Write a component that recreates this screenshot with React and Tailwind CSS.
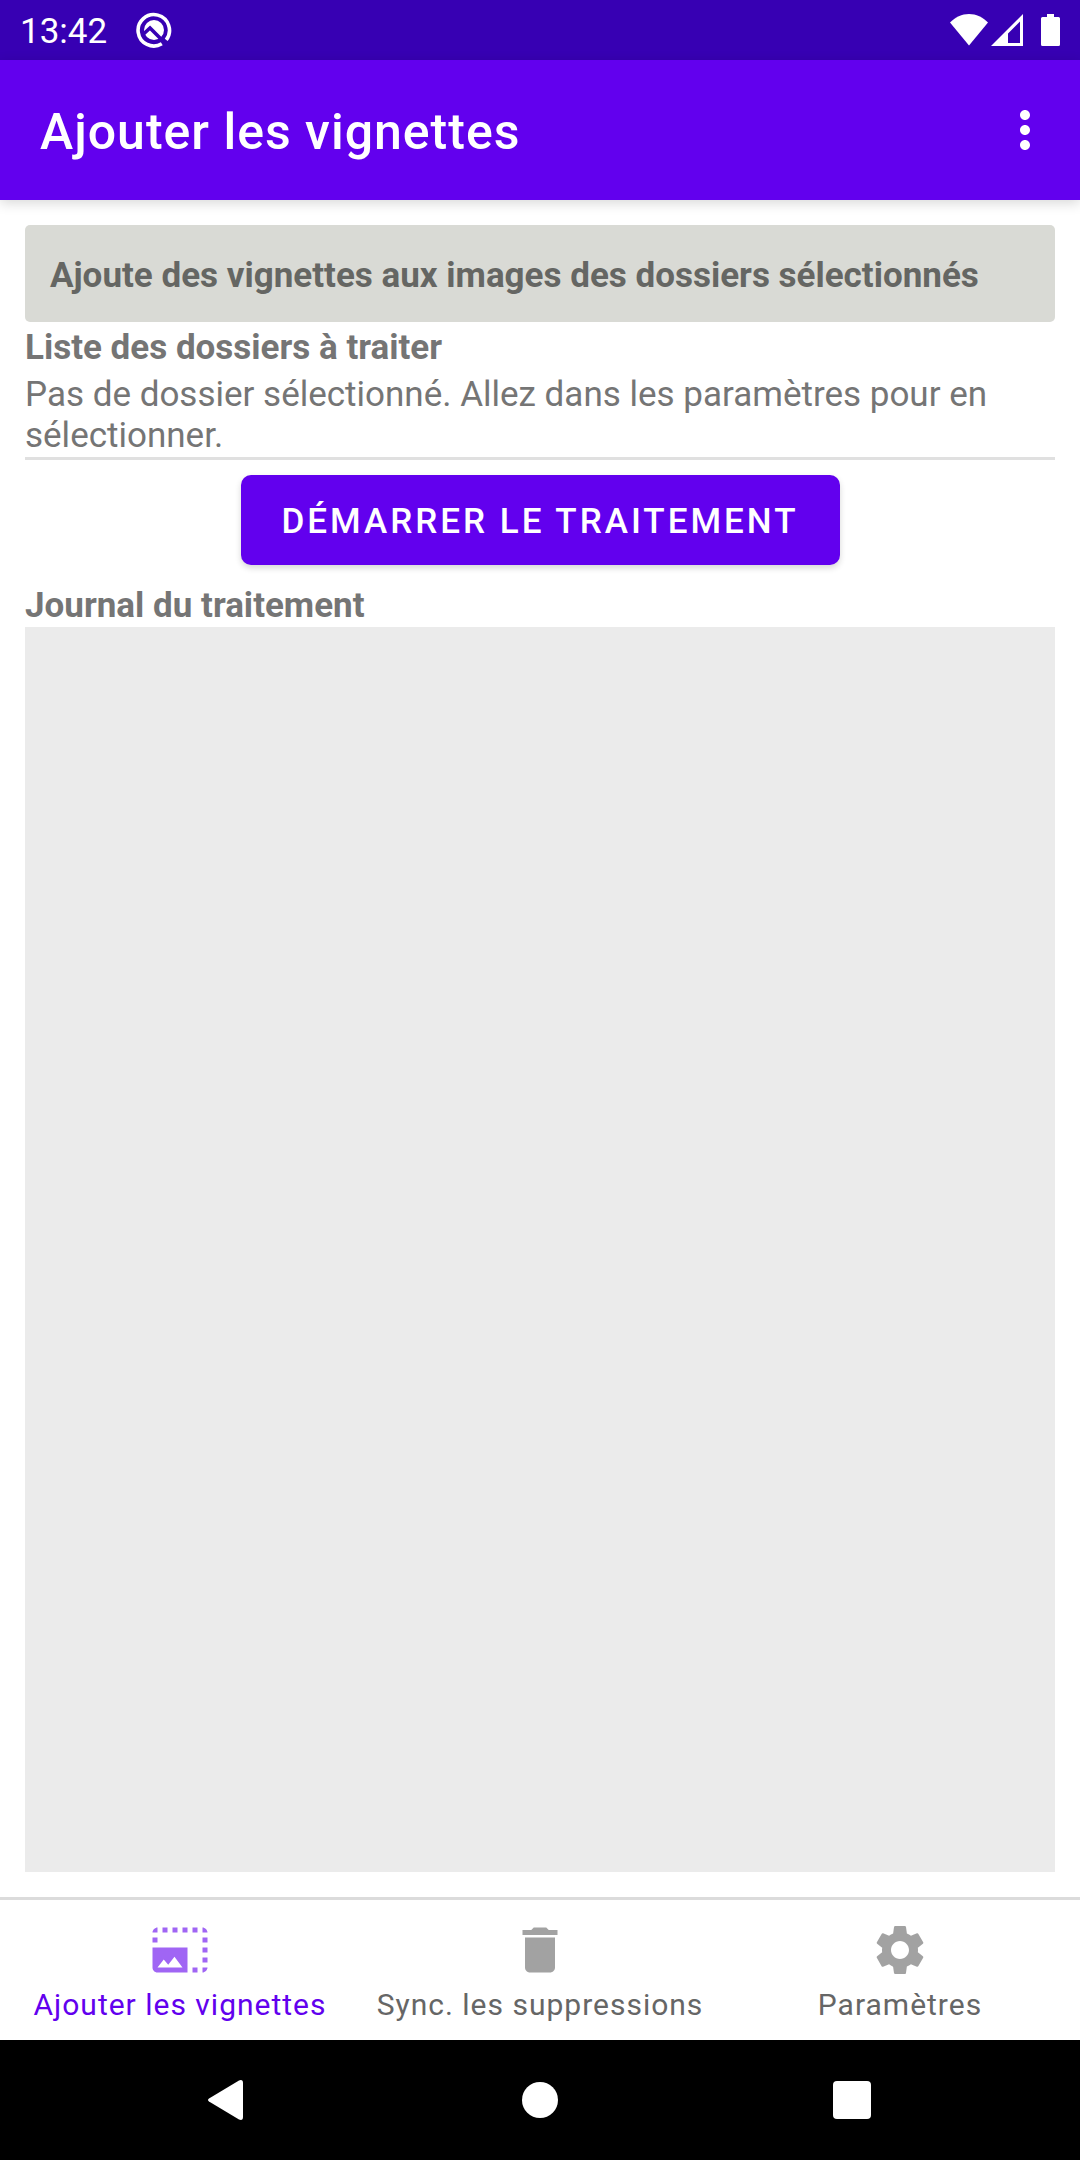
import React from "react";
import { MdDelete, MdMoreVert, MdPhotoSizeSelectLarge, MdSettings } from "react-icons/md";

function StatusBar() {
  return (
    <div className="flex h-[60px] items-center justify-between bg-[#3700b3] px-5 text-white">
      <div className="flex items-center gap-[29px]">
        <span className="pt-[2px] text-[35px] leading-[41px]">13:42</span>
        <svg className="size-9" viewBox="0 0 36 36" fill="none" aria-hidden="true">
          <path d="M30.2 27.9A15.7 15.7 0 1 0 25.8 31.8" stroke="#fff" strokeWidth="3.6" />
          <circle cx="18" cy="18" r="10" fill="#fff" />
          <path d="M7 22.5L14 16L28 30" stroke="#3700b3" strokeWidth="3.6" />
        </svg>
      </div>
      <div className="flex items-center">
        <svg className="h-8 w-[38px]" viewBox="0 0 38 32" aria-hidden="true">
          <path d="M0 8.5C5 3.4 12 0 19 0S33 3.4 38 8.5L19 31.5Z" fill="#fff" />
        </svg>
        <svg className="ml-[3px] h-8 w-8" viewBox="0 0 32 32" aria-hidden="true">
          <path fillRule="evenodd" d="M32 0V32H0ZM29 7.5L17 19.5V29H29Z" fill="#fff" />
        </svg>
        <svg className="ml-[18px] h-8 w-[19px]" viewBox="0 0 19 32" aria-hidden="true">
          <path d="M6 0H13V3H17.5Q19 3 19 4.5V30.5Q19 32 17.5 32H1.5Q0 32 0 30.5V4.5Q0 3 1.5 3H6Z" fill="#fff" />
        </svg>
      </div>
    </div>
  );
}

const tabs = [
  { label: "Ajouter les vignettes", Icon: MdPhotoSizeSelectLarge, active: true },
  { label: "Sync. les suppressions", Icon: MdDelete },
  { label: "Paramètres", Icon: MdSettings },
];

export default function App() {
  return (
    <div className="flex min-h-screen flex-col bg-white font-['Roboto',sans-serif] text-[35px] leading-[41px] text-[#757575]">
      <StatusBar />
      <header className="flex h-[140px] items-center justify-between bg-[#6200ee] pr-[25px] pl-10 text-white shadow-[0_3px_12px_rgba(0,0,0,0.16)]">
        <h1 className="pt-1 text-[50px] leading-[60px] font-medium tracking-[1px]">Ajouter les vignettes</h1>
        <button type="button" aria-label="Plus d'options">
          <MdMoreVert className="size-[60px]" />
        </button>
      </header>

      <main className="flex grow flex-col p-[25px]">
        <p className="rounded-[5px] bg-[#d9dad5] px-[25px] pt-[30px] pb-[26px] font-bold text-[#656663]">
          Ajoute des vignettes aux images des dossiers sélectionnés
        </p>
        <h2 className="mt-[5px] font-bold">Liste des dossiers à traiter</h2>
        <p className="mt-[6px] border-b-[3px] border-[#e0e0e0] pb-[1px]">
          Pas de dossier sélectionné. Allez dans les paramètres pour en sélectionner.
        </p>
        <button
          type="button"
          className="mt-[15px] h-[90px] self-center rounded-[10px] bg-[#6200ee] px-[41px] pt-[2px] font-medium tracking-[3px] text-white shadow-[0_3px_6px_rgba(0,0,0,0.16)]"
        >
          DÉMARRER LE TRAITEMENT
        </button>
        <h2 className="mt-5 pb-[1px] font-bold">Journal du traitement</h2>
        <section aria-label="Journal du traitement" className="grow bg-[#ebebeb]" />
      </main>

      <nav className="grid grid-cols-3 border-t-[3px] border-[#dbdbdb]">
        {tabs.map(({ label, Icon, active }) => (
          <button
            key={label}
            type="button"
            aria-current={active ? "page" : undefined}
            className={
              active
                ? "flex h-[140px] flex-col items-center pt-5 text-[#6200ee]"
                : "flex h-[140px] flex-col items-center pt-5 text-[#666666]"
            }
          >
            <Icon className="size-[60px] opacity-60" />
            <span className="mt-[7px] text-[30px] leading-[36px] tracking-[1px]">{label}</span>
          </button>
        ))}
      </nav>

      <div className="grid h-[120px] grid-cols-3 bg-black px-[72px]">
        <button type="button" aria-label="Retour" className="flex items-center justify-center">
          <svg className="size-10" viewBox="0 0 40 40" aria-hidden="true">
            <path d="M1 18.5L31 0.4Q35 -1 35 3V37Q35 41 31 39.6L1 21.5Q-1 20 1 18.5Z" fill="#fff" />
          </svg>
        </button>
        <button type="button" aria-label="Accueil" className="flex items-center justify-center">
          <span className="size-9 rounded-full bg-white" />
        </button>
        <button type="button" aria-label="Applications récentes" className="flex items-center justify-center">
          <span className="size-[38px] rounded-[4px] bg-white" />
        </button>
      </div>
    </div>
  );
}
